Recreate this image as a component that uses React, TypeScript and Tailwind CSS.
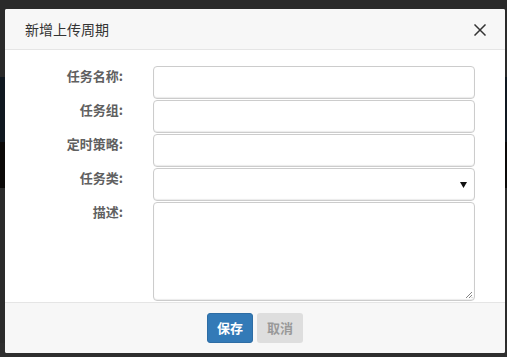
import React from "react";

const font = { fontFamily: '"Noto Sans CJK SC", "Noto Sans", sans-serif' };

function Row({ label, children }: { label: string; children: React.ReactNode }) {
  return (
    <div className="flex items-start">
      <div className="w-[118px] shrink-0 text-right text-[13px] font-bold leading-[20px] pt-[0px] text-[#606060]">
        {label}
      </div>
      <div className="ml-[30px] w-[322px]">{children}</div>
    </div>
  );
}

export default function App() {
  return (
    <div className="relative w-[507px] h-[357px] overflow-hidden bg-[#2b2b2b]" style={font}>
      <div className="flex flex-col">
        <div className="h-[77px] bg-[#2a2a2a]" />
        <div className="h-[65px] bg-[#101820]" />
        <div className="h-[46px] bg-[#0b0908]" />
        <div className="h-[155px] bg-[#2b2b2b]" />
        <div className="h-[14px] bg-[#2e2e2e]" />
      </div>

      <div className="absolute left-[5px] top-[9px] w-[500px] h-[344px] bg-white rounded-[2px] flex flex-col overflow-hidden">
        <div className="h-[41px] shrink-0 bg-[#f7f7f7] border-b border-[#e5e5e5] flex items-center justify-between pl-[20px] pr-[19px]">
          <span className="text-[14px] text-[#333] leading-[20px]">新增上传周期</span>
          <svg width="12" height="12" viewBox="0 0 12 12" className="mt-[2px]">
            <path d="M1 1 L11 11 M11 1 L1 11" stroke="#333" strokeWidth="1.5" strokeLinecap="square" />
          </svg>
        </div>

        <div className="flex-1 flex flex-col gap-px pt-[16px]">
          <Row label="任务名称:">
            <div className="h-[33px] rounded-[4px] border border-[#ccc] bg-white shadow-[inset_0_-1px_1px_rgba(0,0,0,0.08)]" />
          </Row>
          <Row label="任务组:">
            <div className="h-[33px] rounded-[4px] border border-[#ccc] bg-white shadow-[inset_0_-1px_1px_rgba(0,0,0,0.08)]" />
          </Row>
          <Row label="定时策略:">
            <div className="h-[33px] rounded-[4px] border border-[#ccc] bg-white shadow-[inset_0_-1px_1px_rgba(0,0,0,0.08)]" />
          </Row>
          <Row label="任务类:">
            <div className="h-[33px] rounded-[4px] border border-[#ccc] bg-white flex items-center justify-end pr-[7px] shadow-[inset_0_-1px_1px_rgba(0,0,0,0.08)]">
              <svg width="7" height="6" viewBox="0 0 7 6">
                <path d="M0 0 H7 L3.5 6 Z" fill="#111" />
              </svg>
            </div>
          </Row>
          <Row label="描述:">
            <div className="relative h-[99px] rounded-[4px] border border-[#ccc] bg-white shadow-[inset_0_-1px_1px_rgba(0,0,0,0.08)]">
              <svg width="8" height="8" viewBox="0 0 8 8" className="absolute right-[1px] bottom-[1px]">
                <path d="M1 7 L7 1 M4 7 L7 4 M6.5 7 L7 6.5" stroke="#666" strokeWidth="0.8" />
              </svg>
            </div>
          </Row>
        </div>

        <div className="h-[51px] shrink-0 bg-[#f7f7f7] border-t border-[#e5e5e5] flex items-start justify-center gap-[4px] pt-[10px]">
          <div className="w-[46px] h-[30px] rounded-[3px] bg-[#337ab7] border border-[#2e6da4] flex items-center justify-center text-white text-[13px] font-bold">
            保存
          </div>
          <div className="w-[46px] h-[30px] rounded-[3px] bg-[#dedede] flex items-center justify-center text-[#999] text-[13px] font-bold">
            取消
          </div>
        </div>
      </div>
    </div>
  );
}
